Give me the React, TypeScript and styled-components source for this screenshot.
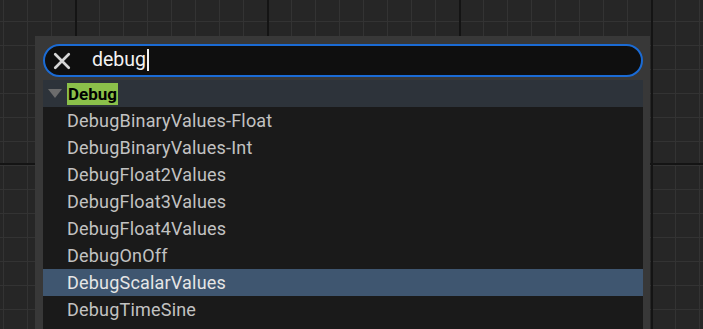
import styled, { createGlobalStyle } from "styled-components";

const GlobalStyle = createGlobalStyle`
  html, body {
    margin: 0;
    height: 100%;
    overflow: hidden;
  }
  body {
    font-family: Roboto, "Noto Sans", sans-serif;
  }
`;

const items = [
  "DebugBinaryValues-Float",
  "DebugBinaryValues-Int",
  "DebugFloat2Values",
  "DebugFloat3Values",
  "DebugFloat4Values",
  "DebugOnOff",
  "DebugScalarValues",
  "DebugTimeSine",
];

const SELECTED = "DebugScalarValues";

function App() {
  return (
    <>
      <GlobalStyle />
      <Canvas>
        <Panel>
          <SearchBox>
            <ClearIcon viewBox="0 0 16 16">
              <path d="M2 2 L14 14 M14 2 L2 14" />
            </ClearIcon>
            <SearchText>
              debug
              <Caret />
            </SearchText>
          </SearchBox>
          <Results>
            <Category>
              <Arrow />
              <Match>Debug</Match>
            </Category>
            {items.map((name) => (
              <Row key={name} selected={name === SELECTED}>
                {name}
              </Row>
            ))}
          </Results>
        </Panel>
      </Canvas>
    </>
  );
}

export default App;

const Canvas = styled.div`
  width: 703px;
  height: 329px;
  box-sizing: border-box;
  padding: 36px 0 0 35px;
  background-color: #262626;
  background-image:
    linear-gradient(90deg, #141414 0 2px, transparent 2px),
    linear-gradient(0deg, #141414 0 2px, transparent 2px),
    linear-gradient(90deg, #333333 0 1px, transparent 1px),
    linear-gradient(0deg, #333333 0 1px, transparent 1px);
  background-size: 192px 192px, 192px 192px, 24px 24px, 24px 24px;
  background-position: 75px 0, 0 165px, 3px 0, 0 22px;
  overflow: hidden;
`;

const Panel = styled.div`
  width: 615px;
  height: 100%;
  box-sizing: border-box;
  padding: 8px 7px 0 8px;
  background: #383838;
  display: flex;
  flex-direction: column;
  gap: 3px;
`;

const SearchBox = styled.div`
  height: 33px;
  flex-shrink: 0;
  box-sizing: border-box;
  border: 2px solid #1b6bd4;
  border-radius: 17px;
  background: #0f0f0f;
  display: flex;
  align-items: center;
  padding-left: 8px;
  gap: 21px;
`;

const ClearIcon = styled.svg`
  width: 18px;
  height: 18px;
  fill: none;
  stroke: #d6d6d6;
  stroke-width: 2.4;
  stroke-linecap: round;
`;

const SearchText = styled.span`
  color: #f2f2f2;
  font-size: 19.5px;
  display: flex;
  align-items: center;
  padding-bottom: 2px;
`;

const Caret = styled.span`
  display: inline-block;
  width: 2px;
  height: 22px;
  background: #f2f2f2;
  margin-left: 1px;
`;

const Results = styled.div`
  display: flex;
  flex-direction: column;
  background: #1a1a1a;
  flex: 1;
`;

const Category = styled.div`
  height: 27px;
  flex-shrink: 0;
  background: #2d333a;
  display: flex;
  align-items: center;
  padding-left: 5px;
  gap: 5px;
`;

const Arrow = styled.span`
  width: 0;
  height: 0;
  border-left: 7px solid transparent;
  border-right: 7px solid transparent;
  border-top: 9px solid #6c6c6c;
`;

const Match = styled.span`
  background: #8bc04a;
  color: #000;
  font-weight: 700;
  font-size: 17px;
  line-height: 22px;
  padding: 0 1px;
`;

const Row = styled.div<{ selected?: boolean }>`
  height: 27px;
  flex-shrink: 0;
  display: flex;
  align-items: center;
  padding-left: 24px;
  font-size: 18px;
  letter-spacing: 0.2px;
  color: ${(p) => (p.selected ? "#e6e6e6" : "#c2c2c2")};
  background: ${(p) => (p.selected ? "#3f5670" : "transparent")};
`;
